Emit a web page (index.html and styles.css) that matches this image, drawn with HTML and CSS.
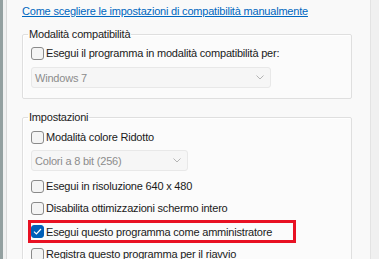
FILE: index.html
```html
<!DOCTYPE html>
<html lang="it">
  <head>
    <meta charset="UTF-8" />
    <title>Compatibilità</title>
    <link rel="stylesheet" href="styles.css">
  </head>
  <body>
    <div class="window">
      <div class="edge-left"></div>
      <div class="edge-gap"></div>

      <main class="panel">
        <a class="help-link" href="#">Come scegliere le impostazioni di compatibilità manualmente</a>

        <fieldset class="group group-compat">
          <legend>Modalità compatibilità</legend>
          <label class="row">
            <span class="box"></span>
            <span>Esegui il programma in modalità compatibilità per:</span>
          </label>
          <div class="select select-wide">
            <span>Windows 7</span>
            <svg class="chevron" width="8" height="5" viewBox="0 0 8 5"><path d="M0.5 0.5 L4 4 L7.5 0.5" fill="none" stroke="#b4b4b4" stroke-width="1"/></svg>
          </div>
        </fieldset>

        <fieldset class="group group-settings">
          <legend>Impostazioni</legend>
          <label class="row">
            <span class="box"></span>
            <span>Modalità colore Ridotto</span>
          </label>
          <div class="select select-narrow">
            <span>Colori a 8 bit (256)</span>
            <svg class="chevron" width="8" height="5" viewBox="0 0 8 5"><path d="M0.5 0.5 L4 4 L7.5 0.5" fill="none" stroke="#b4b4b4" stroke-width="1"/></svg>
          </div>
          <label class="row row-gap">
            <span class="box"></span>
            <span>Esegui in risoluzione 640 x 480</span>
          </label>
          <label class="row">
            <span class="box"></span>
            <span>Disabilita ottimizzazioni schermo intero</span>
          </label>
          <label class="row highlight">
            <span class="box checked">
              <svg width="9" height="7" viewBox="0 0 9 7"><path d="M1 3.6 L3.4 6 L8 1" fill="none" stroke="#fff" stroke-width="1.2"/></svg>
            </span>
            <span>Esegui questo programma come amministratore</span>
          </label>
          <label class="row">
            <span class="box"></span>
            <span>Registra questo programma per il riavvio</span>
          </label>
        </fieldset>
      </main>

      <div class="edge-right"></div>
    </div>
  </body>
</html>
```

FILE: styles.css
```css
*,
*::before,
*::after {
  box-sizing: border-box;
}
:root {
  --bg: #f9f9f9;
  --text: #1a1a1a;
  --link: #0067c0;
  --line: #dfdfdf;
  --accent: #005fb8;
  --mark: #e81123;
}
body {
  margin: 0;
  font-family: "Liberation Sans", Arial, sans-serif;
  font-size: 11px;
  letter-spacing: -0.2px;
  color: var(--text);
  background: var(--bg);
}
.window {
  display: flex;
  height: 259px;
  overflow: hidden;
}
.edge-left {
  width: 3px;
  background: #93a0a0;
}
.edge-gap {
  width: 4px;
  background: #f0f0f0;
  border-right: 1px solid #dadada;
}
.edge-right {
  width: 9px;
  background: #f0f0f0;
  border-left: 1px solid #e3e3e3;
}
.panel {
  flex: 1;
  padding: 4px 18px 0 15px;
}
.help-link {
  display: block;
  line-height: 14px;
  color: var(--link);
  text-decoration: underline;
}
.group {
  margin: 9px 0 0;
  padding: 0 8px 10px;
  border: 1px solid var(--line);
  border-radius: 2px;
  background: #fbfbfb;
  box-shadow: inset 1px 1px 0 #ffffff;
}
.group legend {
  margin-left: -3px;
  padding: 0 1px;
  line-height: 14px;
  color: #222;
}
.group-compat {
  padding-top: 1px;
}
.group-settings {
  margin-top: 11px;
  padding-top: 2px;
}
.row {
  display: flex;
  align-items: center;
  gap: 2px;
  height: 22px;
}
.row-gap {
  margin-top: 4px;
}
.box {
  display: flex;
  align-items: center;
  justify-content: center;
  width: 13px;
  height: 13px;
  border: 1px solid #8a8a8a;
  border-radius: 3px;
  background: #f4f4f4;
}
.box.checked {
  background: var(--accent);
  border-color: var(--accent);
}
.highlight {
  width: 268px;
  height: 23px;
  margin: 1px 0 0 -3px;
  border: 3px solid var(--mark);
}
.select {
  display: flex;
  align-items: center;
  justify-content: space-between;
  height: 21px;
  margin-top: 3px;
  padding: 0 6px 0 3px;
  border: 1px solid #e8e8e8;
  border-radius: 3px;
  background: #f6f6f6;
  color: #8c8c8c;
}
.select-wide {
  width: 240px;
}
.select-narrow {
  width: 157px;
  margin-top: 2px;
}
```
